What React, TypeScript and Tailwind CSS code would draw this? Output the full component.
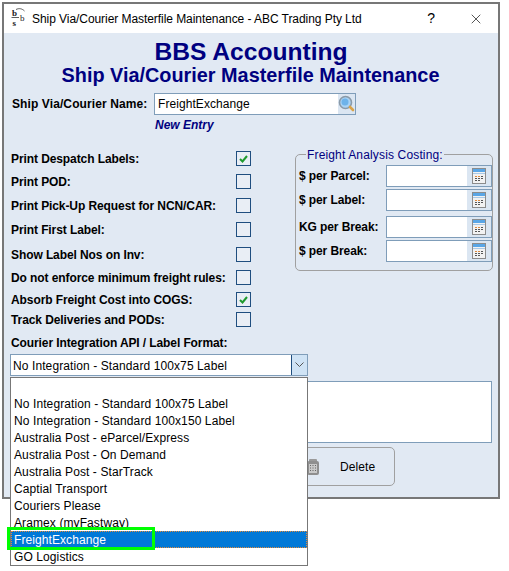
import React from 'react';
import { X } from 'lucide-react';

const checks = [
  { label: 'Print Despatch Labels:', checked: true, mt: 'mt-0' },
  { label: 'Print POD:', checked: false, mt: 'mt-[8px]' },
  { label: 'Print Pick-Up Request for NCN/CAR:', checked: false, mt: 'mt-[9px]' },
  { label: 'Print First Label:', checked: false, mt: 'mt-[9px]' },
  { label: 'Show Label Nos on Inv:', checked: false, mt: 'mt-[10px]' },
  { label: 'Do not enforce minimum freight rules:', checked: false, mt: 'mt-[8px]' },
  { label: 'Absorb Freight Cost into COGS:', checked: true, mt: 'mt-[7px]' },
  { label: 'Track Deliveries and PODs:', checked: false, mt: 'mt-[5px]' },
];

const costing = [
  { label: '$ per Parcel:', mt: 'mt-0' },
  { label: '$ per Label:', mt: 'mt-[2px]' },
  { label: 'KG per Break:', mt: 'mt-[5px]' },
  { label: '$ per Break:', mt: 'mt-[2px]' },
];

const options = [
  '',
  'No Integration - Standard 100x75 Label',
  'No Integration - Standard 100x150 Label',
  'Australia Post - eParcel/Express',
  'Australia Post - On Demand',
  'Australia Post - StarTrack',
  'Captial Transport',
  'Couriers Please',
  'Aramex (myFastway)',
  'FreightExchange',
  'GO Logistics',
];

const LogoIcon = () => (
  <svg width="17" height="20" viewBox="0 0 17 20" className="shrink-0 mb-[2px]">
    <text x="1" y="8" fontSize="9" fontFamily="Liberation Serif, serif" fontWeight="700" fill="#222">b</text>
    <text x="1.5" y="18" fontSize="9" fontFamily="Liberation Serif, serif" fontWeight="700" fill="#222">s</text>
    <text x="9" y="13" fontSize="9" fontFamily="Liberation Serif, serif" fill="#222">b</text>
    <path d="M0.5 9.5h7.5M5 1.5c3-1.5 6-1 8.5 1.5" stroke="#333" strokeWidth="0.8" fill="none" />
  </svg>
);

const SearchIcon = () => (
  <svg width="17" height="18" viewBox="0 0 17 18">
    <circle cx="7.5" cy="7.5" r="6" fill="#a9d3f5" stroke="#8a9aa8" strokeWidth="1.6" />
    <circle cx="7" cy="7" r="3.5" fill="#6db3ea" />
    <path d="M12 12l3 3" stroke="#d9a34a" strokeWidth="2.6" strokeLinecap="round" />
  </svg>
);

const CalcIcon = () => (
  <svg width="14" height="16" viewBox="0 0 14 16">
    <rect x="0" y="0" width="14" height="16" fill="#8c8c8c" />
    <rect x="1" y="1" width="12" height="14" fill="#f2f2f2" />
    <rect x="1" y="1" width="12" height="3" fill="#5aa6e6" />
    <rect x="1" y="5" width="12" height="1" fill="#a9c9e6" />
    <path d="M3 8h2v1H3zM6 8h2v1H6z" fill="#e08a3c" />
    <path d="M9 8h2v1H9zM3 10h2v1H3zM6 10h2v1H6zM9 10h2v1H9zM3 12h2v1H3zM6 12h2v1H6z" fill="#555" />
  </svg>
);

const BinIcon = () => (
  <svg width="12" height="16" viewBox="0 0 12 16">
    <rect x="2" y="0" width="8" height="3" rx="1" fill="#9a9a9a" />
    <rect x="0" y="2" width="12" height="14" rx="2" fill="#8f8f8f" />
    <rect x="2" y="5" width="8" height="9" fill="#c9c9c9" />
    <path d="M3 6h1v1H3zM5.5 6h1v1h-1zM8 6h1v1H8zM3 8.5h1v1H3zM5.5 8.5h1v1h-1zM8 8.5h1v1H8zM3 11h1v1H3zM5.5 11h1v1h-1zM8 11h1v1H8z" fill="#666" />
  </svg>
);

const Checkbox = ({ checked }: { checked: boolean }) => (
  <div className="w-[15px] h-[15px] border border-[#1f4e7f] bg-[#e9eef5] flex items-center justify-center shrink-0">
    {checked && (
      <svg width="9" height="8" viewBox="0 0 9 8">
        <path d="M1 4l2.5 2.5L8 1" stroke="#1f9a2e" strokeWidth="2" fill="none" />
      </svg>
    )}
  </div>
);

export default function App() {
  return (
    <div className="relative w-[509px] h-[571px] bg-white overflow-hidden font-['Liberation_Sans',Arial,sans-serif] text-[12px] text-black">
      <div className="ml-[2px] mt-[2px] w-[498px] h-[497px] border-2 border-[#777777] bg-[#e1e9f3] flex flex-col">
        <div className="h-[29px] bg-white flex items-center shrink-0 pl-[7px]">
          <LogoIcon />
          <span className="ml-[4px] tracking-[-0.06px]">Ship Via/Courier Masterfile Maintenance - ABC Trading Pty Ltd</span>
          <span className="ml-auto mr-[33px] text-[14px]">?</span>
          <X size={16} strokeWidth={1} className="mr-[14px]" />
        </div>

        <h1 className="mt-[6px] h-[26px] leading-[26px] text-center text-[24.6px] font-bold text-[#000080]">BBS Accounting</h1>
        <h2 className="h-[20px] leading-[20px] text-center text-[19.85px] font-bold text-[#000080] -ml-[1px]">Ship Via/Courier Masterfile Maintenance</h2>

        <div className="mt-[8px] h-[22px] flex items-center pl-[8px]">
          <span className="w-[142px] font-bold tracking-[0.1px]">Ship Via/Courier Name:</span>
          <div className="w-[202px] h-[22px] border border-[#7f9db9] bg-white flex items-center">
            <span className="pl-[3px] tracking-[0.07px]">FreightExchange</span>
            <div className="ml-auto w-[17px] h-full bg-[#dbe6f2] flex items-center justify-center">
              <SearchIcon />
            </div>
          </div>
        </div>
        <div className="mt-[2px] h-[16px] leading-[16px] pl-[151px] font-bold italic text-[#000080]">New Entry</div>

        <div className="flex">
          <div className="w-[291px] pl-[7px] pt-[18px] flex flex-col">
            {checks.map((c) => (
              <div key={c.label} className={`flex items-center h-[15px] ${c.mt}`}>
                <span className="w-[225px] font-bold tracking-[-0.09px] whitespace-nowrap">{c.label}</span>
                <Checkbox checked={c.checked} />
              </div>
            ))}
          </div>
          <div className="pt-[21px]">
            <div className="relative w-[198px] h-[117px] border border-[#a0a0a0] rounded-[5px] pt-[10px] pl-[3px]">
              <span className="absolute left-[10px] -top-[7px] px-px bg-[#e1e9f3] leading-[14px] text-[#000080] tracking-[0.15px]">Freight Analysis Costing:</span>
              {costing.map((r) => (
                <div key={r.label} className={`flex items-center h-[22px] ${r.mt}`}>
                  <span className="w-[87px] font-bold tracking-[-0.1px]">{r.label}</span>
                  <div className="w-[106px] h-[22px] border border-[#7f9db9] bg-white flex">
                    <div className="ml-auto w-[24px] h-full bg-[#dbe6f2] flex items-center justify-center">
                      <CalcIcon />
                    </div>
                  </div>
                </div>
              ))}
            </div>
          </div>
        </div>

        <div className="mt-[9px] h-[14px] leading-[14px] pl-[7px] font-bold tracking-[-0.1px]">Courier Integration API / Label Format:</div>
        <div className="mt-[4px] ml-[6px] w-[298px] h-[22px] border border-[#7f9db9] bg-white flex items-center">
          <span className="pl-[2px] pt-[1px] tracking-[0.1px]">No Integration - Standard 100x75 Label</span>
          <div className="ml-auto w-[16px] h-full border-l border-[#1f4e7f] bg-[#cfe3f5] flex items-center justify-center">
            <svg width="9" height="6" viewBox="0 0 9 6">
              <path d="M0.5 0.5L4.5 4.5L8.5 0.5" stroke="#555" fill="none" />
            </svg>
          </div>
        </div>

        <div className="mt-[5px] ml-[6px] w-[482px] h-[62px] border border-[#7f9db9] bg-white shrink-0" />
        <div className="mt-[4px] ml-[226px] w-[165px] h-[39px] border border-[#a0a0a0] rounded-[5px] flex items-center">
          <div className="ml-[76px]">
            <BinIcon />
          </div>
          <span className="ml-[21px] tracking-[0.1px]">Delete</span>
        </div>
      </div>

      <div className="absolute left-[10px] top-[377px] w-[298px] h-[189px] border border-[#777777] bg-white flex flex-col">
        {options.map((o) => (
          <div
            key={o || 'blank'}
            className={
              o === 'FreightExchange'
                ? 'h-[17px] leading-[16px] pl-[2px] bg-[#0078d7] text-white border border-dotted border-[#e08a3c] tracking-[0.08px] whitespace-nowrap'
                : 'h-[17px] leading-[18px] pl-[3px] tracking-[0.1px] whitespace-nowrap overflow-hidden'
            }
          >
            {o}
          </div>
        ))}
      </div>
      <div className="absolute left-[7px] top-[527px] w-[148px] h-[23px] border-[3px] border-[#00ff00]" />
    </div>
  );
}
